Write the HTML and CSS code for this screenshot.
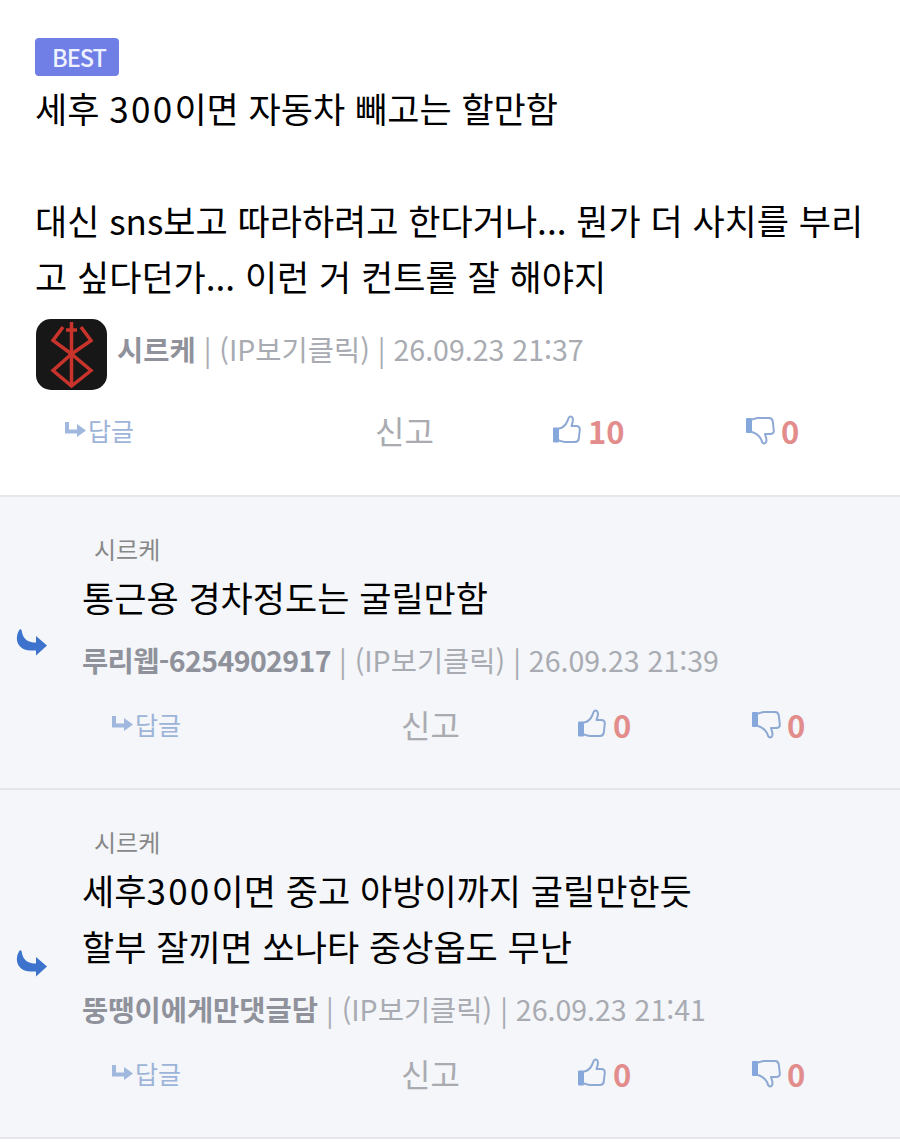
FILE: index.html
```html
<!DOCTYPE html>
<html lang="ko">
<head>
<meta charset="utf-8">
<title>댓글</title>
<link rel="stylesheet" href="styles.css">
</head>
<body>
<svg class="defs" width="0" height="0" aria-hidden="true">
  <symbol id="up" viewBox="0 0 30 30">
    <rect x="1" y="12.500" width="6" height="15" rx="1" fill="#86a7dc"/>
    <path d="M7 13.500c3.500-.6 7-4 8.500-7.500.8-2 1-4.500 3-4.500 2.200 0 2.800 2.500 2.300 5-.4 1.800-1 3.300-1.300 4.500h5c2 0 3.500 1.500 3.300 3.500l-1 9c-.3 2-1.800 3.500-3.800 3.500H13c-2 0-3.500-.8-6-1.500" fill="none" stroke="#8eaad4" stroke-width="2" stroke-linecap="round" stroke-linejoin="round"/>
  </symbol>
  <symbol id="down" viewBox="0 0 30 30">
    <rect x="1" y="3" width="6" height="15" rx="1" fill="#86a7dc"/>
    <path d="M7 4.500C9.500 3.800 11 3 13 3h11c2 0 3.500 1.500 3.800 3.500l1 9c.2 2-1.300 3.500-3.300 3.500H20c.3 1.200.9 2.700 1.300 4.500.5 2.500-.1 5-2.300 5-2 0-2.200-2.500-3-4.500C14.500 21.500 10.500 18 7 17" fill="none" stroke="#8eaad4" stroke-width="2" stroke-linecap="round" stroke-linejoin="round"/>
  </symbol>
  <symbol id="mini" viewBox="0 0 21 16">
    <path d="M0 0h4v7.500h8V2l9 6.500-9 6.500v-3.500H0z" fill="#a0b8de"/>
  </symbol>
  <symbol id="big" viewBox="0 0 31 27">
    <path d="M4 0C-2 8 0 21 15 21.500h5v5L31 16.500 20 7v6.500c-7 0-13-2-14.500-12.500z" fill="#3d73cc"/>
  </symbol>
</svg>

<main class="list">
  <article class="item">
    <div class="content">
      <span class="badge">BEST</span>
      <p class="text">세후 <span class="digits">300</span>이면 자동차 빼고는 할만함<br><br>대신 sns보고 따라하려고 한다거나... 뭔가 더 사치를 부리고 싶다던가... 이런 거 컨트롤 잘 해야지</p>
      <div class="meta">
        <svg class="avatar" viewBox="0 0 71 71" aria-label="프로필">
          <rect width="71" height="71" rx="15" fill="#171717"/>
          <g fill="none" stroke="#c8342c" stroke-width="3.500">
            <path d="M35.500 3v65"/>
            <path d="M35.500 35 17 21.500 27 8"/>
            <path d="M35.500 35 55 21.500 45 8"/>
            <path d="M35.500 35 17 51.500 35.500 67 55 51.500z"/>
            <path d="M30 11h11" />
          </g>
        </svg>
        <span class="info"><b class="nick">시르케</b> | (IP보기클릭) | 26.09.23 21:37</span>
      </div>
      <div class="actions">
        <a class="reply"><svg class="mini"><use href="#mini"/></svg>답글</a>
        <span class="report">신고</span>
        <span class="vote"><svg class="thumb"><use href="#up"/></svg><b>10</b></span>
        <span class="vote"><svg class="thumb"><use href="#down"/></svg><b>0</b></span>
      </div>
    </div>
  </article>

  <article class="item sub">
    <svg class="arrow"><use href="#big"/></svg>
    <div class="content">
      <div class="target">시르케</div>
      <p class="text">통근용 경차정도는 굴릴만함</p>
      <div class="meta">
        <span class="info"><b class="nick tight">루리웹-6254902917</b> | (IP보기클릭) | 26.09.23 21:39</span>
      </div>
      <div class="actions">
        <a class="reply"><svg class="mini"><use href="#mini"/></svg>답글</a>
        <span class="report">신고</span>
        <span class="vote"><svg class="thumb"><use href="#up"/></svg><b>0</b></span>
        <span class="vote"><svg class="thumb"><use href="#down"/></svg><b>0</b></span>
      </div>
    </div>
  </article>

  <article class="item sub">
    <svg class="arrow"><use href="#big"/></svg>
    <div class="content">
      <div class="target">시르케</div>
      <p class="text">세후<span class="digits">300</span>이면 중고 아방이까지 굴릴만한듯<br>할부 잘끼면 쏘나타 중상옵도 무난</p>
      <div class="meta">
        <span class="info"><b class="nick">뚱땡이에게만댓글담</b> | (IP보기클릭) | 26.09.23 21:41</span>
      </div>
      <div class="actions">
        <a class="reply"><svg class="mini"><use href="#mini"/></svg>답글</a>
        <span class="report">신고</span>
        <span class="vote"><svg class="thumb"><use href="#up"/></svg><b>0</b></span>
        <span class="vote"><svg class="thumb"><use href="#down"/></svg><b>0</b></span>
      </div>
    </div>
  </article>
</main>
</body>
</html>
```
FILE: styles.css
```css
* { box-sizing: border-box; }
html, body { margin: 0; background: #fff; }
body { font-family: "Noto Sans CJK KR", "Noto Sans", sans-serif; color: #000; }
.defs { display: block; height: 0; }
.list { display: flex; flex-direction: column; }
.item { border-bottom: 2px solid #e4e6e9; padding: 38px 0 0 35px; height: 497px; }
.sub { background: #f4f6f9; display: flex; align-items: center; padding: 0 0 0 16px; height: 293px; }
.sub:last-child { height: 349px; }
.arrow { width: 31px; height: 27px; flex: none; }
.content { flex: 1; min-width: 0; }
.sub .content { align-self: flex-start; margin-left: 35px; padding-top: 36px; }
.badge { display: block; width: 84px; height: 38px; padding-left: 17px; background: #6f7fe6; color: #eef1ff; border-radius: 4px; font-size: 23.500px; font-weight: 500; line-height: 38px; letter-spacing: -1px; }
.text { margin: 0; font-size: 35px; line-height: 58px; max-width: 840px; }
.digits { letter-spacing: 2.300px; }
.item > .content > .text { margin-top: 4px; line-height: 56px; }
.meta { display: flex; align-items: flex-start; gap: 10px; color: #a9abb2; font-size: 28.500px; margin-top: 16px; }
.sub .meta { margin-top: 6px; }
.avatar { width: 71px; height: 71px; margin-left: 1px; flex: none; margin-top: -1px; }
.nick { color: #8f919b; font-weight: 700; }
.tight { letter-spacing: -0.600px; }
.info { line-height: 40px; }
.item > .content > .meta .info { margin-top: 9px; }
.target { font-size: 24px; line-height: 32px; color: #888; margin-left: 12px; }
.actions { display: grid; grid-template-columns: 310px 177px 193px auto; align-items: center; padding-left: 30px; margin-top: 17px; height: 44px; }
.sub .actions { padding-left: 30px; margin-top: 21px; grid-template-columns: 289px 176px 174px auto; }
.reply { display: flex; align-items: center; gap: 2px; color: #9db4d8; font-size: 25px; }
.mini { width: 21px; height: 16px; }
.report { color: #a9abb0; font-size: 32px; }
.vote { display: flex; align-items: center; gap: 6px; }
.vote b { color: #e28c8c; font-size: 31px; font-weight: 700; }
.thumb { width: 30px; height: 30px; }
```
